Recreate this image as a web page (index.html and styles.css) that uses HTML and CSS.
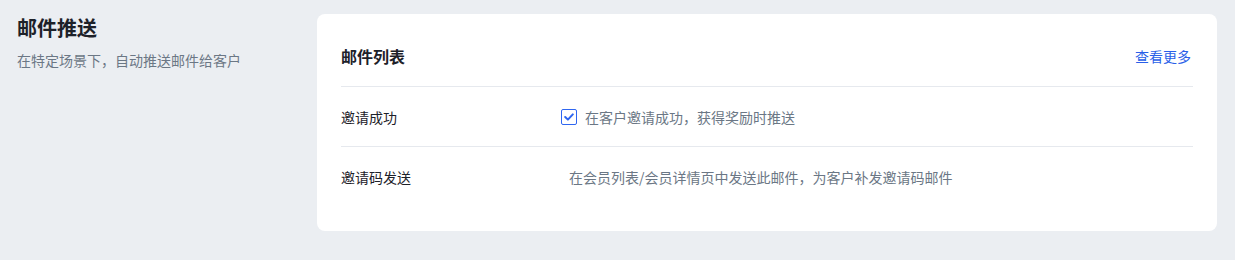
FILE: index.html
```html
<!DOCTYPE html>
<html lang="zh-CN">
<head>
  <meta charset="UTF-8" />
  <title>邮件推送</title>
  <link rel="stylesheet" href="styles.css">
</head>
<body>

<div class="page">
  <div class="intro">
    <h2>邮件推送</h2>
    <p>在特定场景下，自动推送邮件给客户</p>
  </div>

  <div class="card">
    <div class="card-head">
      <h3>邮件列表</h3>
      <a href="#" class="more">查看更多</a>
    </div>

    <div class="mail-row">
      <span class="mail-name">邀请成功</span>
      <label class="mail-desc">
        <span class="check">
          <svg width="10" height="8" viewBox="0 0 10 8"><path d="M1.2 4 L3.9 6.6 L8.8 1.4" fill="none" stroke="#2f66f0" stroke-width="2" stroke-linecap="round" stroke-linejoin="round"/></svg>
        </span>
        在客户邀请成功，获得奖励时推送
      </label>
    </div>

    <div class="mail-row">
      <span class="mail-name">邀请码发送</span>
      <span class="mail-desc plain">在会员列表/会员详情页中发送此邮件，为客户补发邀请码邮件</span>
    </div>
  </div>
</div>

</body>
</html>
```

FILE: styles.css
```css
body {
  margin: 0;
  background: #ebeef2;
  font-family: "Noto Sans CJK SC", "Noto Sans", sans-serif;
  color: #1d2129;
}
.page {
  display: grid;
  grid-template-columns: 300px 900px;
  padding: 14px 0 0 17px;
}
.intro h2 {
  margin: 0;
  font-size: 20px;
  line-height: 28px;
  font-weight: 700;
  color: #1d2129;
}
.intro p {
  margin: 8px 0 0;
  font-size: 14px;
  line-height: 20px;
  color: #6b7785;
}
.card {
  background: #fff;
  border-radius: 8px;
  padding: 24px 24px 24px 24px;
  height: 169px;
}
.card-head {
  display: flex;
  justify-content: space-between;
  align-items: center;
  height: 36px;
  padding-bottom: 12px;
  border-bottom: 1px solid #e6e9ee;
}
.card-head h3 {
  margin: 0;
  font-size: 16px;
  font-weight: 700;
  color: #1d2129;
}
.more {
  font-size: 14px;
  color: #2a5fe8;
  text-decoration: none;
  margin-right: 2px;
}
.mail-row {
  display: flex;
  align-items: center;
  height: 59px;
  font-size: 14px;
}
.mail-row + .mail-row {
  border-top: 1px solid #e6e9ee;
}
.mail-name {
  width: 220px;
  color: #1d2129;
}
.mail-desc {
  display: flex;
  align-items: center;
  color: #6b7785;
}
.mail-desc.plain {
  padding-left: 8px;
}
.check {
  width: 14px;
  height: 14px;
  border: 1px solid #2f66f0;
  border-radius: 2px;
  background: #fff;
  display: flex;
  align-items: center;
  justify-content: center;
  margin-right: 8px;
}
```
